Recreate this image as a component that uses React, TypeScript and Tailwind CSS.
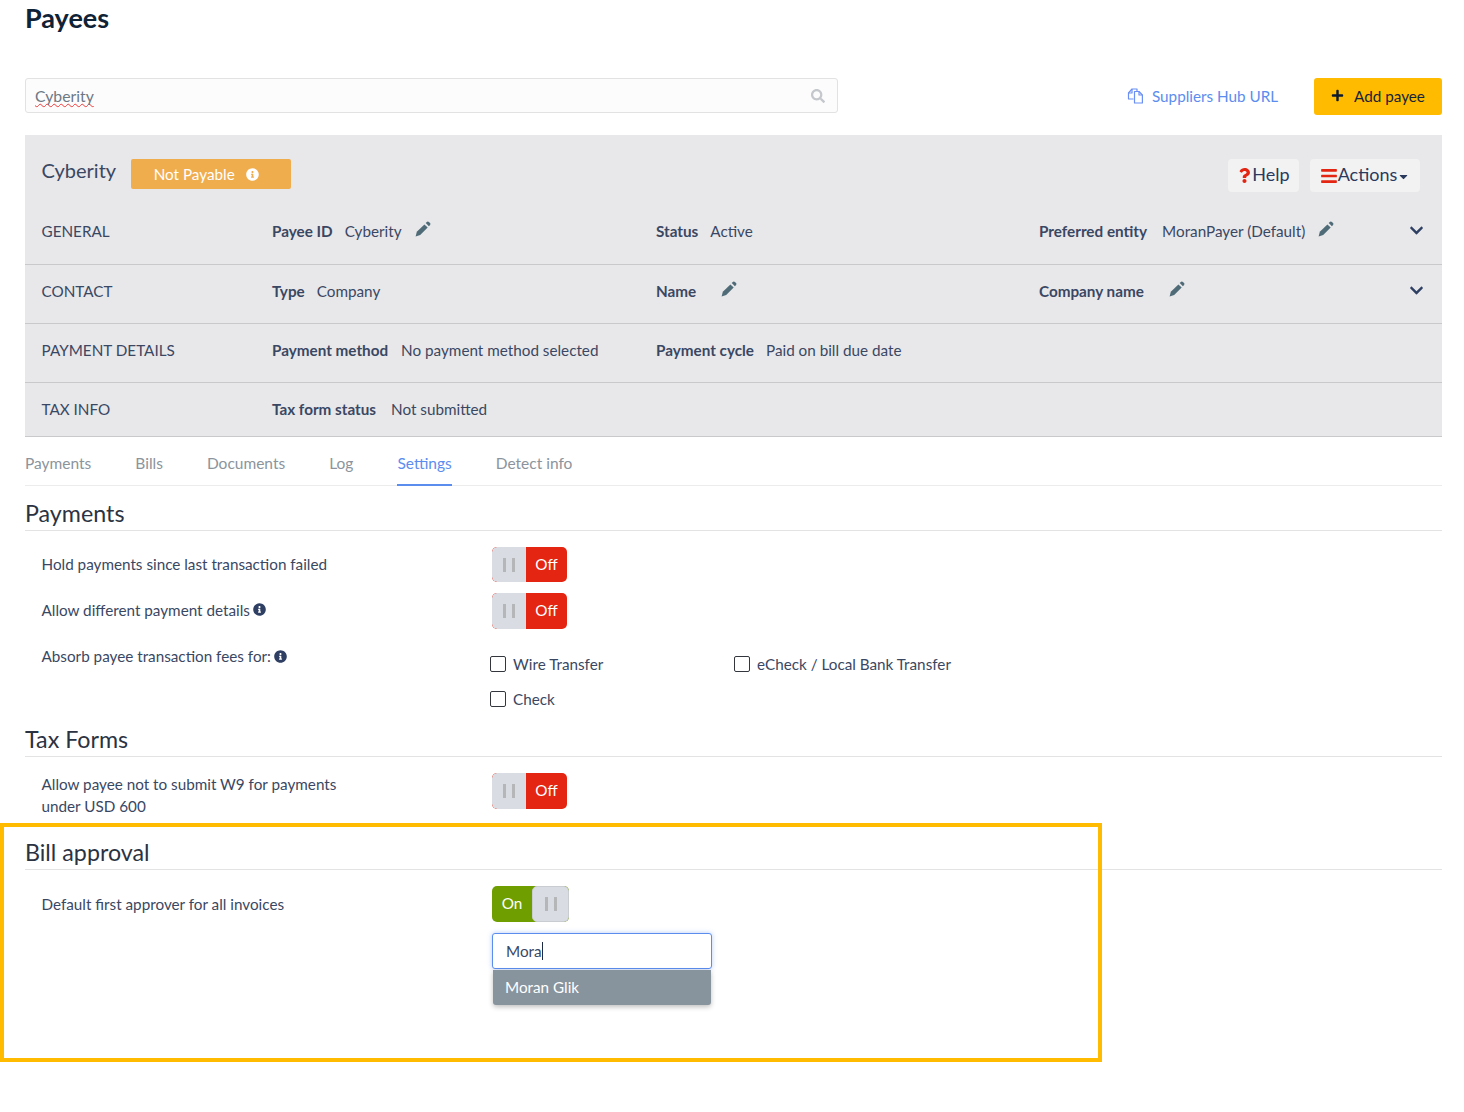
import { FaBars, FaCaretDown, FaChevronDown, FaInfoCircle, FaPlus, FaQuestion, FaSearch } from 'react-icons/fa';

function Pencil() {
  return (
    <svg width="16" height="16" viewBox="0 0 16 16" fill="#4f6b78">
      <path d="M0.6 15.4L1.8 10.8L9.4 3.4L12.7 6.6L5.2 14.1Z" />
      <path d="M10.7 2.1L12.1 0.8Q13 0.2 13.9 0.9L15.1 2.1Q15.8 3 15.1 3.9L13.9 5.3Z" />
    </svg>
  );
}

function Field({ label, value, edit, gap }: { label: string; value?: string; edit?: boolean; gap?: string }) {
  return (
    <div className="flex items-center">
      <span className={`font-bold ${gap ?? 'mr-3'}`}>{label}</span>
      {value && <span>{value}</span>}
      {edit && <span className="ml-[13px] -mt-1"><Pencil /></span>}
    </div>
  );
}

function InfoRow({ title, height, border, children, chevron }: { title: string; height: string; border: boolean; children: React.ReactNode; chevron?: string }) {
  return (
    <div className={`relative grid grid-cols-[230.5px_384px_383px_1fr] items-center pl-[16.5px] pr-[17px] ${height} ${border ? 'border-b border-[#c9c9cc]' : ''}`}>
      <div>{title}</div>
      {children}
      {chevron && <FaChevronDown className={`absolute right-[18px] text-[15px] text-[#2e3f63] ${chevron}`} />}
    </div>
  );
}

function Toggle({ on, height = 'h-9' }: { on?: boolean; height?: string }) {
  const knob = (
    <div className={`flex h-full items-center justify-center gap-[6px] bg-[#d9dce3] ${on ? 'w-[37px] rounded-[5px] border border-[#c9ccd0]' : 'w-[34px] rounded-l-[5px]'}`}>
      <span className="h-[14px] w-[3px] bg-[#b4b6b8]" />
      <span className="h-[14px] w-[3px] bg-[#b4b6b8]" />
    </div>
  );
  if (on) {
    return (
      <div className={`flex w-[77px] overflow-hidden rounded-[5px] bg-[#6f9e00] ${height}`}>
        <div className="flex w-[40px] items-center justify-center pb-[2px] text-white">On</div>
        {knob}
      </div>
    );
  }
  return (
    <div className={`flex w-[75px] overflow-hidden rounded-[5px] bg-[#e32512] ${height}`}>
      {knob}
      <div className="flex flex-1 items-center justify-center pb-[2px] text-white">Off</div>
    </div>
  );
}

function Check({ label, width }: { label: string; width?: string }) {
  return (
    <label className={`flex items-center gap-[7px] ${width ?? ''}`}>
      <span className="h-4 w-4 rounded-[2px] border border-[#33373d] bg-white" />
      {label}
    </label>
  );
}

function Heading({ children, className }: { children: React.ReactNode; className: string }) {
  return <h2 className={`border-b border-[#e3e3e3] text-[23.25px] leading-[28px] text-[#2b3342] ${className}`}>{children}</h2>;
}

function SettingRow({ label, children, className }: { label: React.ReactNode; children: React.ReactNode; className: string }) {
  return (
    <div className={`grid grid-cols-[467px_1fr] ${className}`}>
      <div className="pl-[16.5px]">{label}</div>
      <div>{children}</div>
    </div>
  );
}

function HubIcon() {
  return (
    <svg width="16" height="16" viewBox="0 0 16 16" fill="none" stroke="#6a8ff5" strokeWidth="1.2" strokeLinejoin="round">
      <path d="M6.5 11H1.5V5L5 1H10V3.5" />
      <path d="M5 1V5H1.5" />
      <path d="M7.5 3.5H12L15.4 7V15H7.5Z" />
      <path d="M12 3.5V7H15.4" />
    </svg>
  );
}

export default function App() {
  const tabs = ['Payments', 'Bills', 'Documents', 'Log', 'Settings', 'Detect info'];

  return (
    <div className="relative h-[1112px] bg-white pl-[25px] pr-[22px] font-['Lato',sans-serif] text-[15.25px] leading-[22px] text-[#3a4763]">
      <h1 className="h-[78px] text-[27px] leading-[36px] font-bold text-[#0f2236]">Payees</h1>

      <div className="flex h-[57px] items-start">
        <div className="flex h-[35px] w-[813px] items-center justify-between rounded-[3px] border border-[#e2e2e2] bg-[#fcfcfc] pl-[9px] pr-[12px]">
          <span className="text-[15.75px] text-[#6d7885] underline decoration-[#f03a3a] decoration-wavy decoration-1 underline-offset-[1px] [text-decoration-skip-ink:none]">Cyberity</span>
          <FaSearch className="text-[14px] text-[#c4c7cb]" />
        </div>
        <a className="ml-[289px] mt-[7px] flex items-center gap-[9px] text-[#5b8def]">
          <HubIcon />
          Suppliers Hub URL
        </a>
        <button className="ml-auto flex h-[37px] w-[128px] items-center justify-center gap-[10px] rounded-[3px] bg-[#ffbb00] pb-[2px] text-[#17233a]">
          <FaPlus className="text-[13px] text-[#0c1a2c]" />
          Add payee
        </button>
      </div>

      <div className="relative h-[302px] border-b border-[#c9c9cc] bg-[#e8e8ea]">
        <div className="flex h-[66px] items-start justify-between pl-[16.5px] pr-[22px] pt-[24px]">
          <div className="flex items-start gap-[14.5px]">
            <span className="-mt-[1px] text-[20px] leading-[24px]">Cyberity</span>
            <span className="flex h-[30px] w-[160px] items-center gap-[11px] rounded-[2px] bg-[#f0ad4e] pl-[23px] text-white">
              Not Payable
              <FaInfoCircle className="text-[13px]" />
            </span>
          </div>
          <div className="flex gap-[11px] text-[18px] text-[#2b3a5c]">
            <button className="flex h-[33px] w-[71px] items-center justify-center rounded-[4px] bg-[#f2f2f3] pb-[3px]">
              <FaQuestion className="mt-[3px] text-[15px] text-[#e32512]" />
              Help
            </button>
            <button className="flex h-[33px] w-[110px] items-center justify-center rounded-[4px] bg-[#f2f2f3] pb-[3px]">
              <FaBars className="mt-[3px] text-[18px] text-[#e32512]" />
              Actions
              <FaCaretDown className="mt-[5px] text-[13px] text-[#2b3a5c]" />
            </button>
          </div>
        </div>
        <InfoRow title="GENERAL" height="h-[64px] pb-[4px]" border chevron="top-[22px]">
          <Field label="Payee ID" value="Cyberity" edit />
          <Field label="Status" value="Active" />
          <Field label="Preferred entity" value="MoranPayer (Default)" edit gap="mr-[15px]" />
        </InfoRow>
        <InfoRow title="CONTACT" height="h-[59px] pb-[7px]" border chevron="top-[18px]">
          <Field label="Type" value="Company" />
          <Field label="Name" edit gap="mr-3" />
          <Field label="Company name" edit gap="mr-3" />
        </InfoRow>
        <InfoRow title="PAYMENT DETAILS" height="h-[59px] pb-[7px]" border>
          <Field label="Payment method" value="No payment method selected" gap="mr-[13px]" />
          <Field label="Payment cycle" value="Paid on bill due date" />
        </InfoRow>
        <InfoRow title="TAX INFO" height="h-[53px] pb-[2px]" border={false}>
          <Field label="Tax form status" value="Not submitted" gap="mr-[15px]" />
        </InfoRow>
      </div>

      <div className="flex h-[49px] gap-[44px] border-b border-[#ececec] text-[15.5px] text-[#8b949c]">
        {tabs.map((tab) => (
          <div key={tab} className={`flex h-[49px] items-center border-b-2 pt-[5px] ${tab === 'Settings' ? 'border-[#5b8def] text-[#5b8def]' : 'border-transparent'}`}>
            {tab}
          </div>
        ))}
      </div>

      <Heading className="mt-[13px] h-[32px]">Payments</Heading>
      <SettingRow className="mt-4 h-[35px] items-center" label={<span className="block pb-[1px]">Hold payments since last transaction failed</span>}>
        <Toggle height="h-[35px]" />
      </SettingRow>
      <SettingRow
        className="mt-[11px] h-9 items-center"
        label={
          <span className="flex items-center gap-[3px] pb-[3px]">
            Allow different payment details <FaInfoCircle className="text-[13px] text-[#2e3f63]" />
          </span>
        }
      >
        <Toggle />
      </SettingRow>
      <SettingRow
        className="mt-[17px]"
        label={
          <span className="-mt-[1px] flex items-center gap-[3px]">
            Absorb payee transaction fees for: <FaInfoCircle className="text-[13px] text-[#2e3f63]" />
          </span>
        }
      >
        <div className="-ml-[2px] pt-[7px]">
          <div className="flex">
            <Check label="Wire Transfer" width="w-[244px]" />
            <Check label="eCheck / Local Bank Transfer" />
          </div>
          <div className="mt-[13px]">
            <Check label="Check" />
          </div>
        </div>
      </SettingRow>

      <Heading className="mt-[15px] h-[32px]">Tax Forms</Heading>
      <SettingRow
        className="mt-4 items-start"
        label={
          <span className="block w-[310px]">Allow payee not to submit W9 for payments under USD 600</span>
        }
      >
        <Toggle />
      </SettingRow>

      <Heading className="mt-[21px] h-[32px]">Bill approval</Heading>
      <SettingRow className="mt-4 items-start" label={<span className="block pt-[7px]">Default first approver for all invoices</span>}>
        <Toggle on />
        <div className="mt-[11px] flex h-9 w-[220px] items-center rounded-[3px] border border-[#5b8def] bg-white pl-[13px] shadow-[0_0_5px_rgba(91,141,239,0.45)]">
          Mora<span className="h-[18px] w-px bg-[#1f2a44]" />
        </div>
        <div className="mx-px mt-px flex h-[35px] w-[218px] items-center rounded-b-[3px] bg-[#87939d] pb-[2px] pl-3 text-white shadow-[0_2px_5px_rgba(0,0,0,0.25)]">
          Moran Glik
        </div>
      </SettingRow>

      {/* annotation box drawn over the page */}
      <div className="pointer-events-none absolute left-0 top-[823px] h-[239px] w-[1102px] border-[4px] border-[#ffbb00]" />
    </div>
  );
}
